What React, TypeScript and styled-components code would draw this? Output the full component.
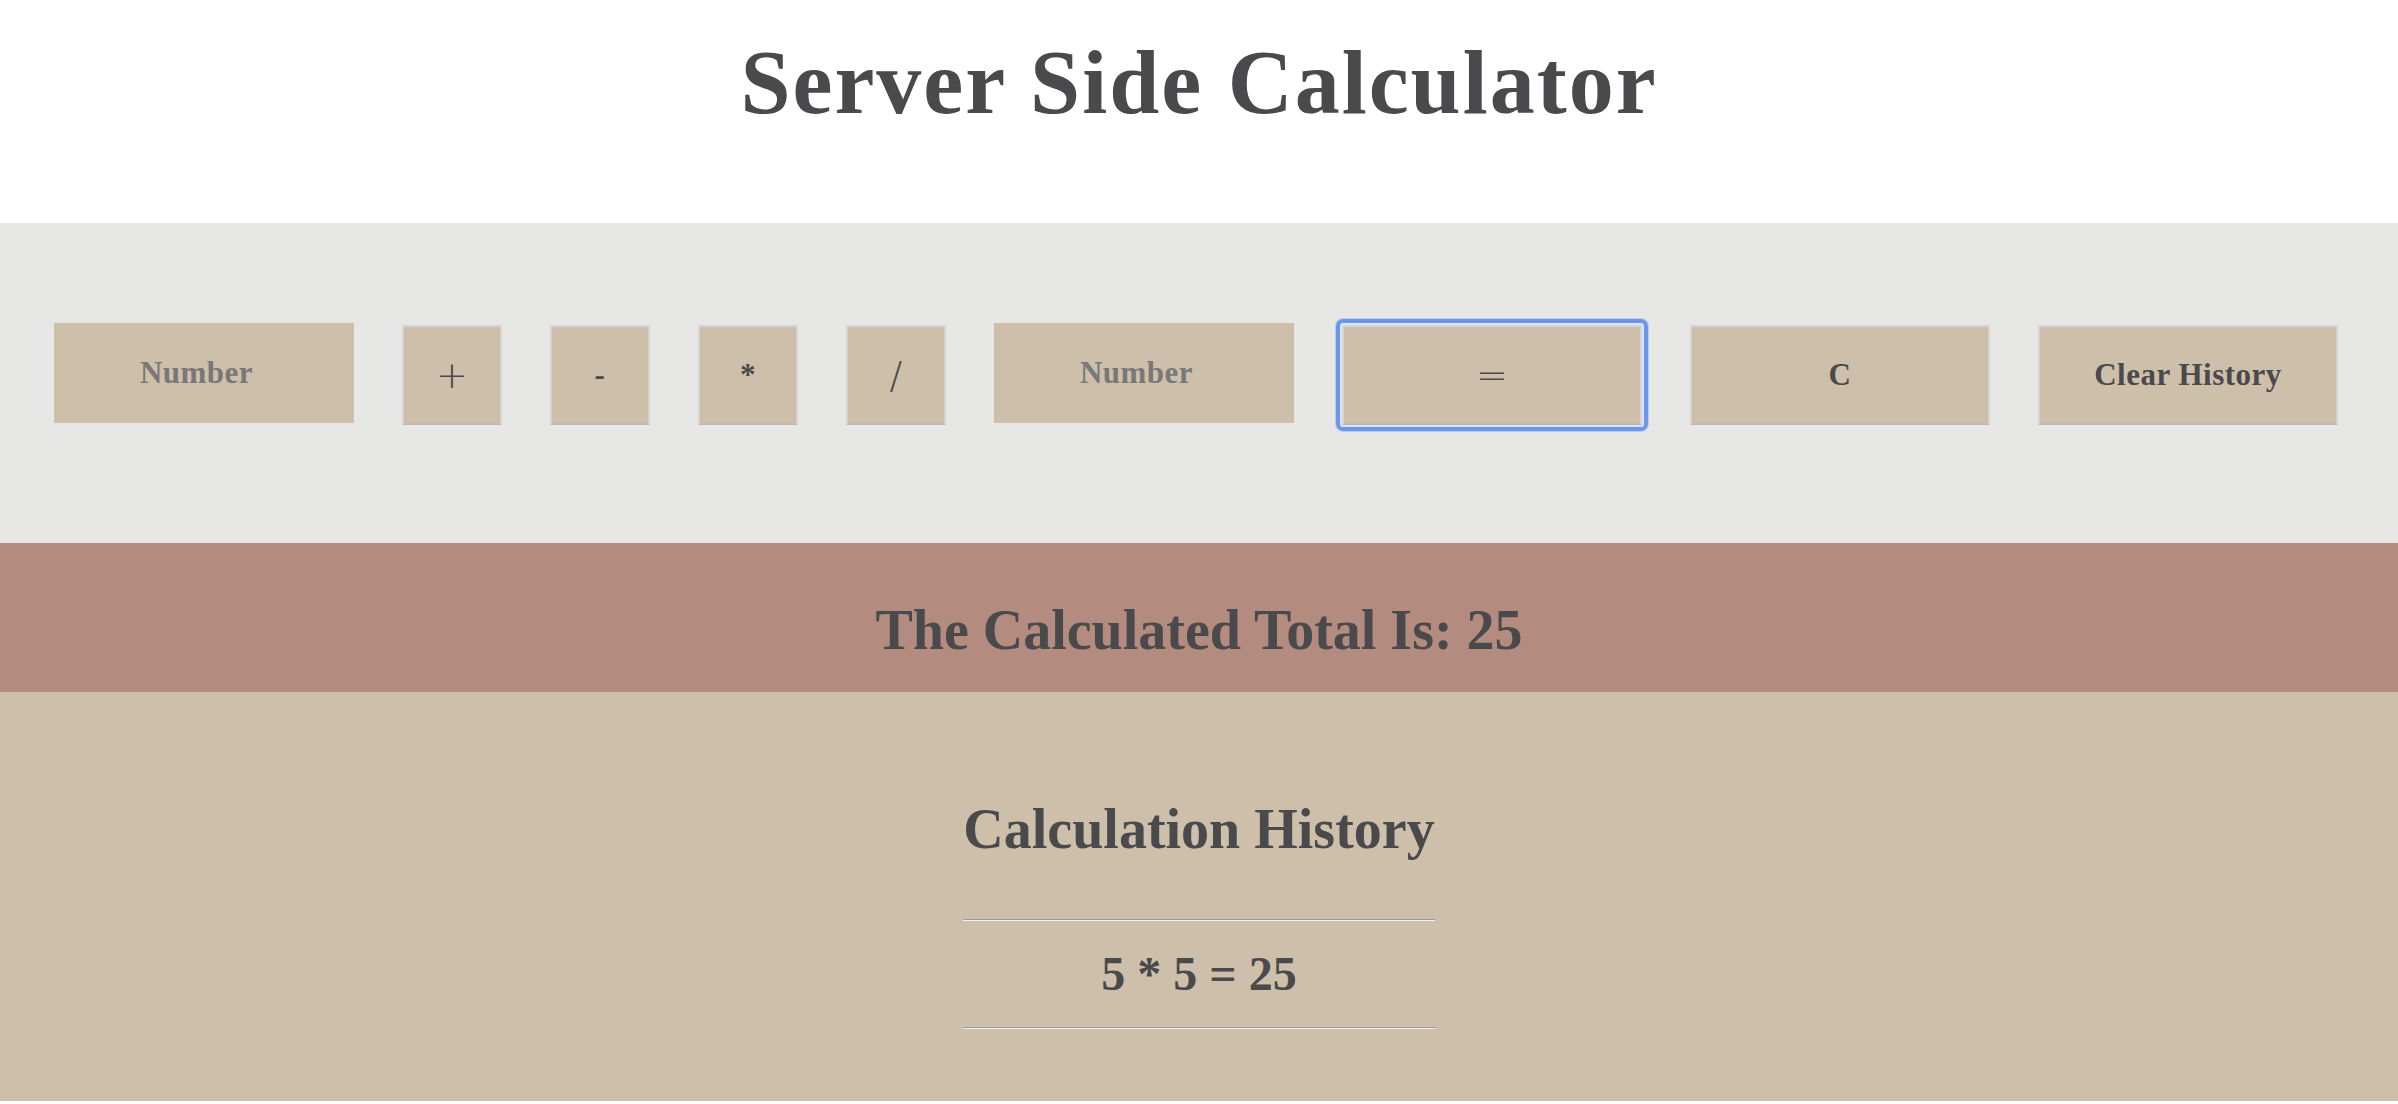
import React from "react";
import styled, { createGlobalStyle } from "styled-components";

const GlobalStyle = createGlobalStyle`
  html, body {
    margin: 0;
    padding: 0;
    background: #ffffff;
  }
  body {
    font-family: "Liberation Serif", "Times New Roman", serif;
    color: #4a4a4c;
  }
  * { box-sizing: border-box; }
`;

const Page = styled.div`
  display: flex;
  flex-direction: column;
  width: 100%;
`;

const Header = styled.header`
  padding: 31px 0 89px;
  background: #ffffff;
  text-align: center;
`;

const Title = styled.h1`
  margin: 0;
  font-family: "Liberation Serif", "Times New Roman", serif;
  font-weight: 700;
  font-size: 90px;
  line-height: 103px;
  letter-spacing: 2px;
  color: #4a4a4c;
`;

const Toolbar = styled.section`
  display: flex;
  align-items: flex-start;
  gap: 48px;
  padding: 100px 0 118px 54px;
  background: #e7e7e5;
`;

const NumberInput = styled.input`
  width: 300px;
  height: 100px;
  border: none;
  outline: none;
  background: #cebfab;
  text-align: center;
  font-family: "Liberation Serif", "Times New Roman", serif;
  font-weight: 700;
  font-size: 31px;
  letter-spacing: 0.5px;
  color: #4a4a4c;
  &::placeholder {
    color: #787878;
  }
`;

const KeyButton = styled.button<{ $wide?: boolean; $thin?: boolean; $focused?: boolean }>`
  position: relative;
  margin-top: 2px;
  width: ${(p) => (p.$wide ? "300px" : "100px")};
  height: 100px;
  padding: 0;
  background: #cebfab;
  border: 2px solid #d6d5d3;
  border-bottom-color: #bbbab8;
  border-radius: 0;
  font-family: ${(p) =>
    p.$thin ? '"DejaVu Sans", sans-serif' : '"Liberation Serif", "Times New Roman", serif'};
  font-weight: ${(p) => (p.$thin ? 300 : 700)};
  font-size: ${(p) => (p.$thin ? "38px" : "31px")};
  letter-spacing: ${(p) => (p.$thin ? "0" : "0.5px")};
  color: #4a4a4c;
  cursor: pointer;
  &::after {
    content: "";
    display: ${(p) => (p.$focused ? "block" : "none")};
    position: absolute;
    inset: -8px;
    border: 4px solid #6b96e9;
    border-radius: 7px;
    box-shadow: 0 0 0 1px rgba(107, 150, 233, 0.35), inset 0 0 0 2px #dbe4f4;
    pointer-events: none;
  }
`;

const TotalBand = styled.section`
  padding: 55px 0 30px;
  background: #b48c7f;
  text-align: center;
`;

const TotalText = styled.h2`
  margin: 0;
  font-family: "Liberation Serif", "Times New Roman", serif;
  font-weight: 700;
  font-size: 56px;
  line-height: 64px;
  color: #4a4a4c;
`;

const HistorySection = styled.section`
  display: flex;
  justify-content: center;
  padding: 105px 0 72px;
  background: #cebfab;
`;

const HistoryBox = styled.div`
  display: flex;
  flex-direction: column;
  align-items: stretch;
  width: 472px;
`;

const HistoryTitle = styled.h2`
  margin: 0 0 58px;
  font-family: "Liberation Serif", "Times New Roman", serif;
  font-weight: 700;
  font-size: 56px;
  line-height: 64px;
  text-align: center;
  white-space: nowrap;
  color: #4a4a4c;
`;

const Rule = styled.hr`
  margin: 0;
  height: 2px;
  border: none;
  border-top: 1px solid #9a9a9c;
  border-bottom: 1px solid #f2f2f2;
`;

const HistoryList = styled.ul`
  margin: 0;
  padding: 0;
  list-style: none;
`;

const HistoryItem = styled.li`
  padding: 25px 0;
  font-family: "Liberation Serif", "Times New Roman", serif;
  font-weight: 700;
  font-size: 48px;
  line-height: 56px;
  text-align: center;
  color: #4a4a4c;
`;

const history = ["5 * 5 = 25"];

export default function App() {
  return (
    <Page>
      <GlobalStyle />
      <Header>
        <Title>Server Side Calculator</Title>
      </Header>
      <Toolbar>
        <NumberInput type="number" placeholder="Number" />
        <KeyButton $thin>+</KeyButton>
        <KeyButton>-</KeyButton>
        <KeyButton>*</KeyButton>
        <KeyButton $thin>/</KeyButton>
        <NumberInput type="number" placeholder="Number" />
        <KeyButton $wide $thin $focused>=</KeyButton>
        <KeyButton $wide>C</KeyButton>
        <KeyButton $wide>Clear History</KeyButton>
      </Toolbar>
      <TotalBand>
        <TotalText>The Calculated Total Is: 25</TotalText>
      </TotalBand>
      <HistorySection>
        <HistoryBox>
          <HistoryTitle>Calculation History</HistoryTitle>
          <Rule />
          <HistoryList>
            {history.map((h) => (
              <React.Fragment key={h}>
                <HistoryItem>{h}</HistoryItem>
                <Rule />
              </React.Fragment>
            ))}
          </HistoryList>
        </HistoryBox>
      </HistorySection>
    </Page>
  );
}
